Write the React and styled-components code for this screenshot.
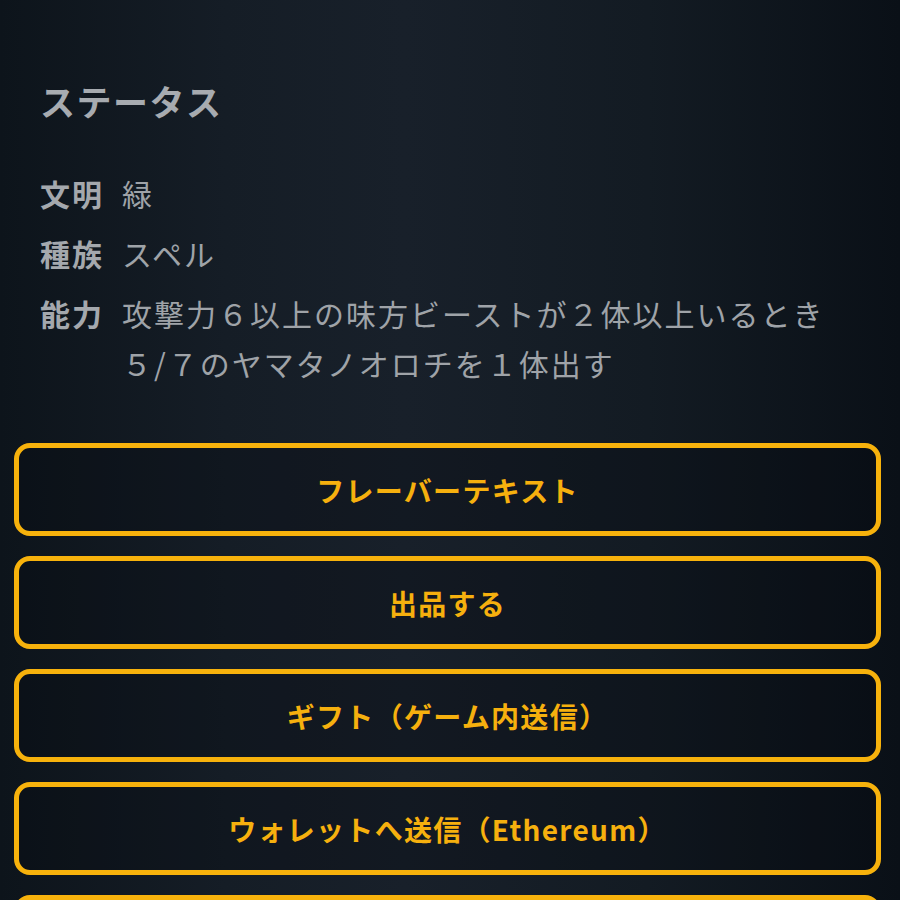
import React from 'react';
import styled, { createGlobalStyle } from 'styled-components';

const GlobalStyle = createGlobalStyle`
    html, body {
        margin: 0;
        padding: 0;
        min-height: 100%;
        background: #111820;
    }
    body {
        font-family: "Noto Sans CJK JP", "Noto Sans", sans-serif;
    }
`;

const stats = [
    { label: '文明', value: '緑' },
    { label: '種族', value: 'スペル' },
    { label: '能力', value: '攻撃力６以上の味方ビーストが２体以上いるとき５/７のヤマタノオロチを１体出す' },
];

// the last button only peeks in at the bottom edge, its label is below the fold
const actions = [
    'フレーバーテキスト',
    '出品する',
    'ギフト（ゲーム内送信）',
    'ウォレットへ送信（Ethereum）',
    '',
];

export default function App() {
    return (
        <Page>
            <GlobalStyle />
            <Status>
                <Title>ステータス</Title>
                <StatList>
                    {stats.map(s => (
                        <StatRow key={s.label}>
                            <StatLabel>{s.label}</StatLabel>
                            <StatValue>{s.value}</StatValue>
                        </StatRow>
                    ))}
                </StatList>
            </Status>

            <Actions>
                {actions.map((a, i) => (
                    <ActionButton key={i}>{a}</ActionButton>
                ))}
            </Actions>
        </Page>
    );
}

const Page = styled.div`
    width: 900px;
    height: 900px;
    overflow: hidden;
    box-sizing: border-box;
    padding: 81px 19px 0 14px;
    background: linear-gradient(90deg, #0d141b 0%, #151d26 25%, #18202a 45%, #131b23 72%, #0a1017 100%);
`;

const Status = styled.div`
    padding: 0 36px 0 26px;
`;

const Title = styled.h2`
    margin: 0;
    font-size: 35px;
    line-height: 40px;
    letter-spacing: 1.5px;
    font-weight: 700;
    color: #a7abb0;
`;

const StatList = styled.div`
    margin-top: 47px;
    display: flex;
    flex-direction: column;
    gap: 10px;
`;

const StatRow = styled.div`
    display: flex;
    align-items: flex-start;
    gap: 18px;
`;

const StatLabel = styled.div`
    flex: none;
    font-size: 30px;
    line-height: 50px;
    letter-spacing: 2px;
    font-weight: 700;
    color: #a4a8ad;
`;

const StatValue = styled.div`
    flex: 1;
    font-size: 30px;
    line-height: 50px;
    letter-spacing: 2px;
    font-weight: 400;
    color: #9fa3a8;
`;

const Actions = styled.div`
    margin-top: 55px;
    display: flex;
    flex-direction: column;
    gap: 20px;
`;

const ActionButton = styled.button`
    height: 93px;
    flex: none;
    box-sizing: border-box;
    border: 5px solid #f7b20c;
    border-radius: 16px;
    background: rgba(6, 10, 16, 0.3);
    color: #f6b00e;
    font-family: "Noto Sans CJK JP", "Noto Sans", sans-serif;
    font-size: 28px;
    font-weight: 700;
    letter-spacing: 1.3px;
    cursor: pointer;
`;
